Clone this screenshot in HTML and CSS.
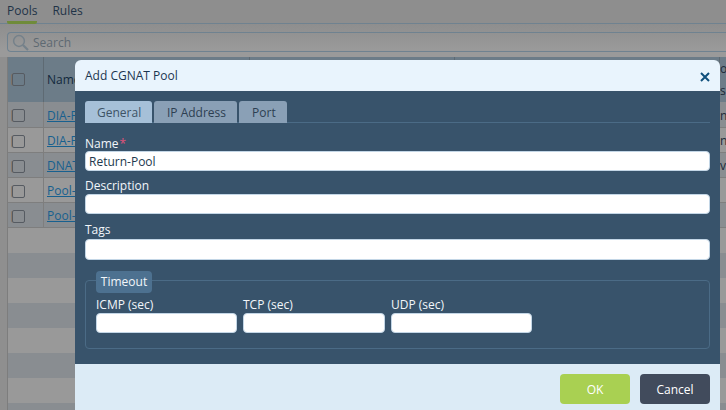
FILE: index.html
```html
<!DOCTYPE html>
<html lang="en">
<head>
<meta charset="utf-8">
<title>Add CGNAT Pool</title>
<link rel="stylesheet" href="styles.css">
</head>
<body>
<div class="page">
  <div class="top">
    <nav class="page-tabs">
      <span class="page-tab active">Pools</span>
      <span class="page-tab">Rules</span>
    </nav>
    <div class="search">
      <svg class="search-icon" width="17" height="17" viewBox="0 0 17 17"><circle cx="7" cy="7" r="5.4" fill="none" stroke="#75818a" stroke-width="1.5"/><path d="M11 11L16 16" stroke="#75818a" stroke-width="2.2"/></svg>
      <span>Search</span>
    </div>
  </div>
  <div class="table">
    <div class="row head"><div class="cell check"><i class="box"></i></div><div class="cell name">Name</div><div class="cell col"></div><div class="cell flex"></div><div class="cell end"><span>o</span><span>s</span></div></div>
    <div class="row dark"><div class="cell check"><i class="box"></i></div><div class="cell name"><a>DIA-P</a></div><div class="cell col"></div><div class="cell flex"></div><div class="cell end">n</div></div>
    <div class="row"><div class="cell check"><i class="box"></i></div><div class="cell name"><a>DIA-P</a></div><div class="cell col"></div><div class="cell flex"></div><div class="cell end">n</div></div>
    <div class="row dark"><div class="cell check"><i class="box"></i></div><div class="cell name"><a>DNAT</a></div><div class="cell col"></div><div class="cell flex"></div><div class="cell end">v</div></div>
    <div class="row"><div class="cell check"><i class="box"></i></div><div class="cell name"><a>Pool-</a></div><div class="cell col"></div><div class="cell flex"></div><div class="cell end"></div></div>
    <div class="row dark"><div class="cell check"><i class="box"></i></div><div class="cell name"><a>Pool-</a></div><div class="cell col"></div><div class="cell flex"></div><div class="cell end"></div></div>
    <div class="empty"></div><div class="empty dark"></div><div class="empty"></div><div class="empty dark"></div><div class="empty"></div><div class="empty dark"></div><div class="empty"></div><div class="empty dark"></div>
  </div>
</div>
<section class="dialog">
  <header class="dialog-head">
    <h1>Add CGNAT Pool</h1>
    <svg class="close" width="10" height="10" viewBox="0 0 10 10"><path d="M1 1L9 9M9 1L1 9" stroke="#0f4f7c" stroke-width="2"/></svg>
  </header>
  <div class="dialog-body">
    <div class="tabs">
      <span class="tab current">General</span>
      <span class="tab">IP Address</span>
      <span class="tab">Port</span>
    </div>
    <div class="field first">
      <label>Name<b>*</b></label>
      <div class="input">Return-Pool</div>
    </div>
    <div class="field">
      <label>Description</label>
      <div class="input"></div>
    </div>
    <div class="field tags">
      <label>Tags</label>
      <div class="input tall"></div>
    </div>
    <div class="group">
      <span class="legend">Timeout</span>
      <div class="group-row">
        <div class="small"><label>ICMP (sec)</label><div class="input"></div></div>
        <div class="small mid"><label>TCP (sec)</label><div class="input"></div></div>
        <div class="small"><label>UDP (sec)</label><div class="input"></div></div>
      </div>
    </div>
  </div>
  <footer class="dialog-foot">
    <button class="btn ok">OK</button>
    <button class="btn cancel">Cancel</button>
  </footer>
</section>
</body>
</html>
```
FILE: styles.css
```css
* { box-sizing: border-box; }
html, body { margin: 0; padding: 0; }
body {
  width: 726px;
  height: 410px;
  overflow: hidden;
  position: relative;
  font: 12px/16px "Open Sans", sans-serif;
  background: #8f8f8f;
}
.page { height: 410px; overflow: hidden; }
.top { height: 57px; overflow: hidden; background: linear-gradient(#8e8e8e 0, #8e8e8e 24px, #9a9a9a 50px); }
.page-tabs { height: 24px; display: flex; gap: 15px; padding: 3px 7px 0; border-bottom: 1px solid #6f8290; }
.page-tab { height: 21px; color: #1f3347; }
.page-tab.active { border-bottom: 3px solid #6f8b3a; border-radius: 2px; height: 21px; }
.search { margin: 8px 0 0 7px; height: 20px; border: 1px solid #6f8290; border-right: 0; border-radius: 4px 0 0 4px; display: flex; align-items: center; gap: 4px; padding: 1px 0 0 4px; color: #5e6972; }
.search-icon { flex: none; }
.table { border-left: 1px solid #7d7d7d; margin-left: 7px; }
.row { display: flex; height: 25px; border-bottom: 1px solid #7e7e7e; background: #999; }
.row.dark { background: #898d91; }
.row.head { height: 45px; background: #6c7c88; border-bottom: 0; color: #12283c; }
.row:nth-child(2) { height: 26px; }
.cell { border-right: 1px solid #7e7e7e; display: flex; align-items: center; padding-top: 2px; }
.head .cell { border-right-color: #5e6a73; padding-top: 0; }
.cell.check { width: 36px; padding-left: 4px; }
.cell.name { width: 206px; padding-left: 3px; }
.cell.name a { color: #17608f; text-decoration: underline; }
.cell.col { width: 205px; }
.cell.flex { flex: 1; }
.cell.end { width: 6px; border-right: 0; flex-direction: column; color: #1c2a38; justify-content: center; line-height: 22px; align-items: flex-start; overflow: hidden; }
.box { width: 13px; height: 13px; border: 1px solid #565b62; border-radius: 2px; display: block; box-shadow: -1px 0 0 -0.4px #8a6d50; }
.empty { height: 25px; background: #999; }
.empty:first-of-type { height: 26px; }
.empty.dark { background: #898d91; }
.dialog { position: absolute; left: 75px; top: 60px; width: 645px; height: 350px; display: flex; flex-direction: column; border-radius: 6px 6px 0 0; overflow: hidden; }
.dialog-head { height: 31px; flex: none; background: #e9f4fd; display: flex; align-items: center; justify-content: space-between; padding: 0 10px; }
.dialog-head h1 { margin: 0; font-size: 12px; font-weight: 400; color: #1b3650; }
.close { margin-top: 2px; }
.dialog-body { height: 273px; flex: none; background: #38536b; padding: 10px 10px 0; color: #f2f6fa; }
.tabs { height: 22px; display: flex; gap: 2px; border-bottom: 1px solid #4b6b86; }
.tab { height: 22px; padding: 3px 11px 0 13px; border-radius: 3px 3px 0 0; background: #8aa0b6; color: #2d3f52; line-height: 17px; }
.tab.current { background: #a6c0d8; color: #3d5366; padding-left: 12px; width: 67px; }
.field label { display: block; line-height: 16px; }
.field label b { color: #e0527a; font-weight: 400; margin-left: 1px; }
.input { height: 20px; background: #fff; border: 1px solid #c3d6e6; border-radius: 4px; color: #22384d; padding-left: 3px; line-height: 20px; }
.field { margin-top: 7px; }
.field.first { margin-top: 13px; }
.field.first label { height: 15px; }
.field.tags label { height: 18px; padding-top: 1px; }
.input.tall { height: 21px; }
.group { position: relative; margin-top: 20px; height: 69px; border: 1px solid #4b6b86; border-radius: 4px; padding: 15px 10px 0; }
.legend { position: absolute; left: 10px; top: -10px; width: 56px; height: 22px; background: #4d7190; border-radius: 4px; text-align: center; line-height: 22px; }
.group-row { display: flex; gap: 6px; }
.small { width: 141px; }
.small.mid { width: 142px; }
.small label { display: block; line-height: 16px; height: 17px; padding-top: 1px; }
.dialog-foot { flex: 1; background: #dcebf6; display: flex; justify-content: flex-end; gap: 10px; padding: 10px 10px 0; }
.btn { width: 70px; height: 30px; border: 0; border-radius: 4px; color: #fff; font: 12px/16px "Open Sans", sans-serif; padding: 1px 0 0; }
.btn.ok { background: #a9d052; }
.btn.cancel { background: #414b5c; }
```
